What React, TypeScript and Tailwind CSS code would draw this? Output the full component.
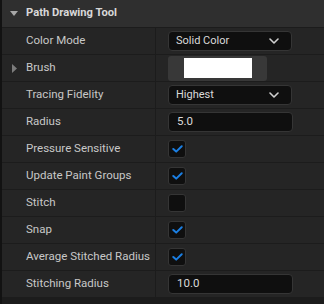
import React from "react";

const font = { fontFamily: "Roboto, 'Noto Sans', sans-serif" };

function Chevron() {
  return (
    <svg width="10" height="6" viewBox="0 0 10 6" className="shrink-0">
      <path d="M1 1 L5 5 L9 1" fill="none" stroke="#d0d0d0" strokeWidth="1.6" strokeLinecap="round" strokeLinejoin="round" />
    </svg>
  );
}

function Dropdown({ label }: { label: string }) {
  return (
    <div className="w-[124px] h-[20px] rounded-[4px] bg-[#0f0f0f] border border-[#353535] flex items-center justify-between pl-[7px] pr-[12px] text-[11px] text-[#dadada]">
      <span>{label}</span>
      <Chevron />
    </div>
  );
}

function Input({ value }: { value: string }) {
  return (
    <div className="w-[125px] h-[20px] rounded-[4px] bg-[#0f0f0f] border border-[#353535] flex items-center pl-[8px] text-[11.5px] text-[#dadada]">
      {value}
    </div>
  );
}

function Check({ checked }: { checked: boolean }) {
  return (
    <div className="w-[18px] h-[18px] rounded-[3px] bg-[#0f0f0f] border border-[#353535] flex items-center justify-center">
      {checked && (
        <svg width="11" height="8" viewBox="0 0 11 8">
          <path d="M1.3 4 L4.2 6.6 L9.7 1.3" fill="none" stroke="#1b7fe3" strokeWidth="2" strokeLinecap="round" strokeLinejoin="round" />
        </svg>
      )}
    </div>
  );
}

function Swatch() {
  return (
    <div className="w-[99px] h-[25px] rounded-[3px] bg-[#383838] flex items-center justify-center">
      <div className="w-[68px] h-[20px] bg-white" />
    </div>
  );
}

type Row = { label: string; value: React.ReactNode; expander?: boolean };

const rows: Row[] = [
  { label: "Color Mode", value: <Dropdown label="Solid Color" /> },
  { label: "Brush", value: <Swatch />, expander: true },
  { label: "Tracing Fidelity", value: <Dropdown label="Highest" /> },
  { label: "Radius", value: <Input value="5.0" /> },
  { label: "Pressure Sensitive", value: <Check checked /> },
  { label: "Update Paint Groups", value: <Check checked /> },
  { label: "Stitch", value: <Check checked={false} /> },
  { label: "Snap", value: <Check checked /> },
  { label: "Average Stitched Radius", value: <Check checked /> },
  { label: "Stitching Radius", value: <Input value="10.0" /> },
];

export default function App() {
  return (
    <div className="w-[324px] h-[304px] flex bg-[#1c1c1c] overflow-hidden" style={font}>
      <div className="w-[2px] bg-[#121212] shrink-0" />
      <div className="flex-1 flex flex-col">
        <div className="h-[28px] bg-[#2f2f2f] border-b border-[#1c1c1c] flex items-center shrink-0">
          <div className="w-[24px] flex justify-center">
            <svg width="8" height="5" viewBox="0 0 8 5">
              <path d="M0 0 L8 0 L4 5 Z" fill="#a8a8a8" />
            </svg>
          </div>
          <span className="text-[11.2px] font-bold text-[#d8d8d8]">Path Drawing Tool</span>
        </div>
        {rows.map((r) => (
          <div key={r.label} className="h-[27px] flex border-b border-[#1c1c1c] bg-[#252525] shrink-0">
            <div className="w-[154px] flex items-center border-r border-[#1c1c1c]">
              <div className="w-[24px] flex justify-center">
                {r.expander && (
                  <svg width="5" height="9" viewBox="0 0 5 9">
                    <path d="M0 0 L5 4.5 L0 9 Z" fill="#7c7c7c" />
                  </svg>
                )}
              </div>
              <span className="text-[11.5px] text-[#c8c8c8]">{r.label}</span>
            </div>
            <div className="flex-1 flex items-center pl-[12px]">{r.value}</div>
          </div>
        ))}
        <div className="flex-1 bg-[#1c1c1c]" />
      </div>
    </div>
  );
}
